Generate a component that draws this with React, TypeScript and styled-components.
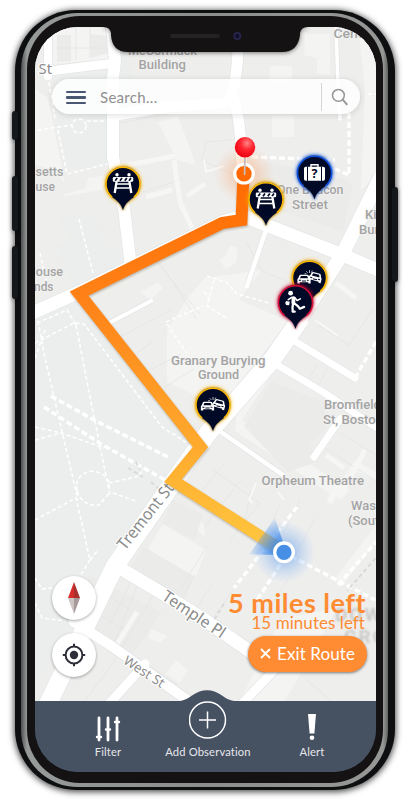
import React from "react";
import styled, { createGlobalStyle } from "styled-components";

const GlobalStyle = createGlobalStyle`
  * { box-sizing: border-box; }
  body { margin: 0; background: #fff; font-family: Lato, "Open Sans", sans-serif; }
  button { font: inherit; border: 0; padding: 0; cursor: pointer; }
`;

const Stage = styled.main`
  width: 410px;
  height: 803px;
  padding: 10px 15px 13px;
  overflow: hidden;
  background: #fff;
`;

const Phone = styled.div`
  position: relative;
  z-index: 0;
  width: 380px;
  height: 780px;
  padding: 3px 7px 3px 6px;
  border-radius: 61px;
  background: #0d0f10;
  box-shadow: 0 1px 6px 1px rgba(0, 0, 0, 0.7);
`;

const SideButton = styled.span<{ $side: "left" | "right"; $top: number; $height: number }>`
  position: absolute;
  z-index: -1;
  top: ${(p) => p.$top}px;
  ${(p) => p.$side}: -3px;
  width: 6px;
  height: ${(p) => p.$height}px;
  border-radius: 3px;
  background: #15191b;
  box-shadow: 0 1px 4px rgba(0, 0, 0, 0.45);
`;

const Rim = styled.div`
  height: 100%;
  padding: 3px 5px 4px 6px;
  border-radius: 57px;
  background: linear-gradient(90deg, #4d504f 0, #969a98 6px, #8b8e8c 50%, #969896 362px, #626463 367px);
`;

const Bezel = styled.div`
  height: 100%;
  padding: 11px 7px 11px 8px;
  border-radius: 53px;
  background: #141212;
`;

const Screen = styled.div`
  position: relative;
  display: flex;
  flex-direction: column;
  width: 341px;
  height: 745px;
  overflow: hidden;
  border-radius: 43px;
  background: #465162;
`;

const MapArea = styled.section`
  position: relative;
  display: flex;
  flex-direction: column;
  justify-content: space-between;
  flex: 1;
  padding: 52px 9px 24px 17px;
  background: #eeeeed;
`;

const MapDrawing = styled.svg`
  position: absolute;
  inset: 0;
  width: 341px;
  height: 675px;
`;

const Notch = styled.svg`
  position: absolute;
  z-index: 3;
  top: -1px;
  left: 68px;
  width: 205px;
  height: 38px;
  overflow: visible;
  filter: drop-shadow(0 1px 2px rgba(0, 0, 0, 0.5));
`;

const SearchBar = styled.div`
  position: relative;
  display: flex;
  align-items: center;
  width: 308px;
  height: 35px;
  padding: 0 11px 0 14px;
  border-radius: 18px;
  background: rgba(255, 255, 255, 0.8);
  box-shadow: 0 1px 6px rgba(0, 0, 0, 0.14);
`;

const MenuButton = styled.button`
  display: flex;
  flex-direction: column;
  gap: 3.2px;
  width: 20px;
  padding-top: 2px;
  background: none;
`;

const MenuLine = styled.span`
  height: 2.2px;
  border-radius: 1px;
  background: #4a5874;
`;

const SearchText = styled.span`
  flex: 1;
  padding-left: 14px;
  font-size: 15px;
  letter-spacing: 0.3px;
  color: #8f8f8f;
`;

const Divider = styled.span`
  width: 1px;
  height: 28px;
  margin-right: 9px;
  background: #d4d4d4;
`;

const LowerRow = styled.div`
  position: relative;
  display: flex;
  justify-content: space-between;
  align-items: flex-end;
`;

const Controls = styled.div`
  display: flex;
  flex-direction: column;
  gap: 13px;
`;

const RoundButton = styled.button`
  display: grid;
  place-items: center;
  width: 44px;
  height: 44px;
  border-radius: 50%;
  background: #fff;
  box-shadow: 0 1px 3px rgba(0, 0, 0, 0.35);
`;

const Trip = styled.div`
  display: flex;
  flex-direction: column;
  align-items: flex-end;
  padding-bottom: 5px;
  color: #ff8b32;
  white-space: nowrap;
`;

const Distance = styled.strong`
  padding-right: 1px;
  font-size: 27px;
  line-height: 27px;
  font-weight: 700;
  letter-spacing: 0.5px;
`;

const Duration = styled.span`
  padding-right: 2px;
  font-size: 17px;
  line-height: 13px;
  letter-spacing: 0.05px;
`;

const ExitButton = styled.button`
  display: flex;
  align-items: center;
  justify-content: center;
  gap: 6px;
  width: 119px;
  height: 36px;
  margin-top: 7px;
  padding-bottom: 2px;
  border-radius: 18px;
  background: #ff8b32;
  box-shadow: 0 1px 3px rgba(0, 0, 0, 0.5);
  color: #fff;
  font-size: 17px;
  letter-spacing: 0.1px;
`;

const Tabs = styled.nav`
  position: relative;
  z-index: 1;
  height: 71px;
  display: grid;
  grid-template-columns: 100px 100px 108px;
  padding-left: 23px;
  background: #465162;
`;

const Bump = styled.svg`
  position: absolute;
  left: 139px;
  top: -11px;
  width: 66px;
  height: 12px;
`;

const Tab = styled.button<{ $gap: number }>`
  position: relative;
  display: flex;
  flex-direction: column;
  align-items: center;
  justify-content: flex-end;
  gap: ${(p) => p.$gap}px;
  padding-bottom: 13px;
  background: none;
  color: #e6e8ec;
  font-size: 11.2px;
  line-height: 15px;
  letter-spacing: 0.15px;
  white-space: nowrap;
`;

type Kind = "barrier" | "bag" | "cars" | "runner";

const Car = () => (
  <g>
    <path fill="#fff" fillRule="evenodd" d="M-4-4.8h8q1 0 1.5 1L6.7-1q1 .4 1 1.6v4H5V3.4H-5v1.2h-2.7v-4q0-1.2 1-1.6l1.2-2.8q.5-1 1.5-1ZM-3.6-3.5-4.7-1H4.7L3.6-3.5Z" />
    <path stroke="#000a26" strokeWidth="1.1" d="M-6 1.2h2.5M6 1.2H3.5M-2.5 2h5" />
  </g>
);

const Glyph = ({ kind }: { kind: Kind }) => {
  if (kind === "barrier")
    return (
      <g stroke="#fff" fill="none" strokeWidth="1.5">
        <circle cx="-6" cy="-9.3" r="1.7" fill="#fff" stroke="none" />
        <circle cx="6" cy="-9.3" r="1.7" fill="#fff" stroke="none" />
        <rect x="-10.2" y="-6.9" width="20.4" height="4.6" rx="1.2" fill="#fff" stroke="none" />
        <path stroke="#000a26" strokeWidth="1.7" d="m-7.8-3.2 2-2.8M-3-3.2l2-2.8M1.8-3.2l2-2.8M6-3.2l2-2.8" />
        <path strokeWidth="2.3" d="M-6.3-3-8.3 9M6.3-3 8.3 9" />
        <path d="M-7 4H7M-6.5-.1h13" />
      </g>
    );
  if (kind === "bag")
    return (
      <g>
        <path stroke="#fff" fill="none" strokeWidth="1.4" d="M-3.5-6v-2.3h7V-6" />
        <rect x="-10.5" y="-6.2" width="21" height="14" rx="1.7" fill="#fff" />
        <path stroke="#000a26" strokeWidth="1" d="M-7-6.5v15M7-6.5v15" />
        <text x="0" y="5.3" textAnchor="middle" fontFamily="Open Sans, sans-serif" fontWeight="700" fontSize="12.5" fill="#000a26">?</text>
      </g>
    );
  if (kind === "cars")
    return (
      <g>
        <g transform="translate(-5.5 1.2) scale(.86 .92)"><Car /></g>
        <g transform="translate(5.9 -.6) rotate(14) scale(.84 .98)"><Car /></g>
        <path stroke="#fff" strokeWidth=".7" d="M0-5v-3M-1.8-5.2l-1.4-1.5M1.8-5.2l1-2.3M-3-4.2h-2" />
      </g>
    );
  return (
    <g fill="none" stroke="#fff" strokeLinecap="round" strokeLinejoin="round">
      <circle cx="-4.9" cy="-9.3" r="2.4" fill="#fff" stroke="none" />
      <path strokeWidth="3.8" d="M-2-4.4-2.2.2" />
      <path strokeWidth="1.6" d="M-3.8-5.2-7.2-2.8M-.8-5 1.6-2 4.8-3.6" />
      <path strokeWidth="2.3" d="M-2.4.8-3 4.8-2.8 9.2h2M-1.2.8 2.4 3.6 4.4 6.2 8.6 4.4" />
      <path fill="#fff" stroke="none" d="m-9.3-1.6 3.6.9-.7 3.4-3 -.3-.9-2.2Z" />
    </g>
  );
};

const Pin = ({ x, y, color, kind }: { x: number; y: number; color: string; kind: Kind }) => {
  const shape = "M0 26.5C-1.8 19.5-5.5 17.2-10.2 13.5A17 17 0 1 1 10.2 13.5C5.5 17.2 1.8 19.5 0 26.5Z";
  return (
    <g transform={`translate(${x} ${y})`}>
      <circle r="18" cy="-.3" fill={color} opacity=".7" filter="url(#glow)" />
      <path d={shape} fill="#000a26" stroke={color} strokeWidth="3" strokeOpacity=".25" filter="url(#soft)" />
      <path d={shape} fill="#000a26" />
      <path d="M-10.9 13.2A17 17 0 1 1 10.9 13.2" fill="none" stroke={color} strokeWidth="1.5" />
      <Glyph kind={kind} />
    </g>
  );
};

type Label = [string, number, number, number?];
const labels: Label[] = [
  ["McCormack", 128, 54.5, 69], ["Building", 138.5, 69, 47.5], ["Cent", 333.5, 37.5, 29],
  ["setts", 35.5, 176, 28], ["use", 35.5, 190.5, 19.5], ["House", 27, 276, 36], ["nds", 34, 290.5, 19.5],
  ["One Beacon", 277, 194, 66.5], ["Street", 292, 208.5, 36], ["King's", 365, 219], ["Burying", 359, 233.5],
  ["Granary Burying", 171, 364.5, 94.5], ["Ground", 198, 379, 41], ["Bromfield", 324, 409, 57],
  ["St, Boston", 323, 423.5, 60], ["Orpheum Theatre", 261.5, 485, 102.5],
  ["Wash", 351, 510, 32], ["(South)", 348, 525, 43],
];

const roads: [number, string][] = [
  [8, "M48 27V76"],
  [9, "M50 71 90 66 115 63"],
  [12, "M112 27 115 60 113 78V157L119 185 124 208 131 267"],
  [11, "M116 115 165 107 225 103Q236 98 238 50V27"],
  [11, "M232 95Q241 112 242 175V200"],
  [13, "M30 314 77 293 222 222 243 216 338 253 380 271"],
  [18, "M45 710 115 566 168 490 208 433 272 360 299 321"],
  [14, "M299 321 327 278 343 253 380 178"],
  [7, "M288 337 355 378M272 362 323 392 380 430M340 419 314 457"],
  [4.5, "M218 430 283 475M265 233 247 286"],
  [13, "M118 567 160 592 205 620 248 650 262 660"],
  [10, "M74 622 110 645 190 702"],
  [9, "M145 664 108 705M284 660 240 706"],
  [4, "M111 322 151 301"],
  [3.5, "M336 27 338 85 340 119"],
];

const routePath = "M243.5 174 241.5 220 222 223 79 293.5 200.5 447 173 480.5 283 551";

const MapView = () => (
  <MapDrawing viewBox="35 27 341 675" aria-label="Route map">
    <defs>
      <filter id="glow" x="-50%" y="-50%" width="200%" height="200%"><feGaussianBlur stdDeviation="2" /></filter>
      <filter id="soft" x="-50%" y="-50%" width="200%" height="200%"><feGaussianBlur stdDeviation="1" /></filter>
      <linearGradient id="route" gradientUnits="userSpaceOnUse" x1="0" y1="170" x2="0" y2="552">
        <stop offset="0" stopColor="#ff6900" /><stop offset=".35" stopColor="#ff8318" />
        <stop offset=".75" stopColor="#ffad2f" /><stop offset="1" stopColor="#ffc83f" />
      </linearGradient>
      <radialGradient id="ball" cx=".6" cy=".3" r=".7">
        <stop offset="0" stopColor="#ff8585" /><stop offset=".45" stopColor="#ff2631" /><stop offset="1" stopColor="#ee0010" />
      </radialGradient>
      <radialGradient id="blueGlow"><stop offset=".2" stopColor="#4f93ea" stopOpacity=".5" /><stop offset="1" stopColor="#7db2f5" stopOpacity="0" /></radialGradient>
      <radialGradient id="orangeGlow"><stop offset=".2" stopColor="#ff7a22" stopOpacity=".32" /><stop offset="1" stopColor="#ff9a55" stopOpacity="0" /></radialGradient>
      <radialGradient id="beam" gradientUnits="userSpaceOnUse" cx="284" cy="552" r="38">
        <stop offset=".25" stopColor="#3d86e4" stopOpacity=".85" /><stop offset="1" stopColor="#5c9df0" stopOpacity=".04" />
      </radialGradient>
    </defs>

    <rect x="35" y="27" width="341" height="675" fill="#eeeeed" />
    <path fill="#eceeee" d="M35 318 74 299 199 448 168 480 35 685ZM35 80 110 72 107 165 66 170 52 80ZM60 216 95 215 104 250 118 248 126 268 74 292 57 246 70 240ZM118 64 130 55 132 78 128 110 118 112Z" />
    <g fill="#f4f4f3">
      <path d="M52 28H110V60L52 64ZM35 89 48 98 65 184 55 170 35 165ZM62 195 86 188 88 178 108 175 102 190 66 196Z" />
      <path d="M158 122 178 116 196 165 177 160ZM270 66H292V83H269ZM305 34H330V75L317 73V58L304 55ZM272 116H294V137H272ZM358 27 365 90 361 190 376 176V27Z" />
      <path d="M189 296 205 278 262 270 239 300 289 321 220 407 167 382 167 330ZM230 245 238 248 236 263 226 269 219 260 227 254ZM140 292 158 282 163 288 150 300Z" />
      <path d="M237 412 255 391 271 376 242 420 350 490 340 500 235 431Z" />
      <path d="M181 507 204 524 205 536 178 520ZM163 524 206 550 196 577 148 549ZM327 502 355 460 380 475 376 480 351 469 332 505ZM334 580 376 525V542L341 587Z" />
      <path d="M151 629 167 636 160 643 148 638ZM176 660 188 670 180 683 166 674ZM104 572 116 566 90 620 78 620ZM40 702 68 675 46 702ZM280 620 338 607 285 701 240 701Z" />
    </g>
    <g fill="#ebebea">
      <path d="M57 35H71V61L57 62ZM90 34 108 36V53L91 58ZM255 170 267 162 345 180 353 184 343 232 258 203Z" />
      <path d="M244 426 272 382 325 402 325 430 310 444 319 461 288 472ZM173 500 203 514 195 540 162 523ZM144 547 194 577 184 600 128 570ZM89 575 162 612 132 655 80 620Z" />
    </g>
    <path fill="none" stroke="#e3e5e5" strokeWidth=".8" d="M76 28V60M90 28V58M56 48H108M120 123 178 112M143 192 183 179M148 252 200 314M160 263 197 319M206 142 202 160 232 174M206 142 231 140M246 241 261 270 322 297M318 325 349 345 374 308M122 336 171 310M136 354 152 342M150 370 181 354M165 387 194 369M280 345 268 362M318 363 306 385M328 367 316 390M213 470 260 503 230 540M241 480 205 526M224 464 194 500M340 433 376 455M325 448 376 481M251 490 245 520M96 588 132 611M85 606 126 630M104 580 93 601M145 565 114 645M133 577 110 625M154 594 121 650M195 575 184 594M213 583 190 618M280 505 265 536M300 500 278 545M315 518 293 560M207 546 180 590M151 667 178 685M119 655 84 702M85 633 51 700M307 680 332 702M253 562 213 618M288 579 261 620" />
    <path fill="none" stroke="#f6f6f5" strokeWidth="5" d="M128 165 175 156M146 197 172 190M187 196 205 184M174 160 180 202 194 232M326 455 344 468M340 496 365 450M329 501 344 479M137 612 114 649M336 283 356 298" />
    <path fill="none" stroke="#f8f8f7" strokeWidth="2" d="M204 160 206 172 224 166M284 500 278 492M256 483 249 500 253 503M315 320 338 336" />

    <g fill="none" strokeLinejoin="round">
      {roads.map(([w, d]) => <path key={d} d={d} stroke="#e2e6e6" strokeWidth={w + 1.4} />)}
      {roads.map(([w, d]) => <path key={d} d={d} stroke="#fff" strokeWidth={w} strokeLinecap="round" />)}
    </g>

    <g fill="none" stroke="#fff" strokeWidth="1.5" strokeDasharray="4 2.5">
      <path d="M35 343 74 323 84 324 162 427 189 444M37 323 67 310 76 325M38 321 45 358 64 440 78 500M35 358 45 330M76 325 90 397 106 476 110 495M35 427 61 433 104 448M35 440 61 433M77 491Q74 473 94 471 111 475 109 489M109 483 140 476 142 468M113 493 136 501M35 520 76 498 90 560 98 550M77 491Q83 507 99 505L110 492M90 560 80 576M35 578 42 589 52 588M35 603 42 618 65 621M48 76 55 118M38 130 72 125M87 121 105 121M58 130 67 174 107 164M79 219 93 273M40 253 48 288" />
      <circle cx="79" cy="126" r="7" />
      <path d="M368 94H376M207 276 226 282 237 294 269 303M214 280 207 306 226 318M210 300 203 290M166 322 203 306M167 324 193 363" />
    </g>
    <g fill="none" stroke="#fff" strokeWidth="3.4" strokeDasharray="6 3">
      <path d="M51 396 96 421 170 458M44 407 101 444 165 480" />
      <path d="M355 378 377 340M349 95V175L335 169M252 157 335 160M297 507 234 588M284 556 278 568 254 605M283 552 375 600M378 540 338 585" />
    </g>
    <path fill="none" stroke="#d7d9d9" strokeWidth="1.8" strokeDasharray="4 3" d="M128 468 143 477M136 462 140 470M151 482 158 488M380 553 347 591M224 604 214 620" />

    <g fontFamily="Roboto, sans-serif" fontSize="19" fontWeight="700" fill="#cbcbca" letterSpacing="2" filter="url(#soft)">
      <text x="335" y="621">DOW</text>
      <text x="344" y="643">CRO</text>
    </g>
    <g fontFamily="Roboto, sans-serif" fontSize="13" fontWeight="500" fill="#a3a3a3" stroke="#f4f4f3" strokeWidth="1.2" paintOrder="stroke" strokeLinejoin="round">
      {labels.map(([t, x, y, w]) => <text key={t + y} x={x} y={y} textLength={w} lengthAdjust="spacingAndGlyphs">{t}</text>)}
    </g>
    <g fontFamily="Noto Sans, sans-serif" fill="#8c8c8c" stroke="#fff" strokeWidth="2" paintOrder="stroke">
      <text x="38.5" y="74" fontSize="14" textLength="13.5" lengthAdjust="spacingAndGlyphs">St</text>
      <text transform="translate(125 551) rotate(-51.5)" fontSize="16.5" textLength="80" lengthAdjust="spacingAndGlyphs">Tremont St</text>
      <text transform="translate(161 599) rotate(33.5)" fontSize="16" textLength="72" lengthAdjust="spacingAndGlyphs">Temple Pl</text>
      <text transform="translate(122.5 663) rotate(33)" fontSize="13.2" textLength="46" lengthAdjust="spacingAndGlyphs">West St</text>
    </g>

    <circle cx="244" cy="174" r="30" fill="url(#orangeGlow)" />
    <path d={routePath} transform="translate(.5 1.5)" fill="none" stroke="#5b4a35" strokeOpacity=".35" strokeWidth="12" filter="url(#soft)" />
    <path d={routePath} fill="none" stroke="url(#route)" strokeWidth="12" />

    <Pin x={314.5} y={173} color="#0b50df" kind="bag" />
    <Pin x={123} y={184} color="#ffb900" kind="barrier" />
    <Pin x={266} y={199.5} color="#ffb900" kind="barrier" />
    <Pin x={309.5} y={278} color="#ffb900" kind="cars" />
    <Pin x={295.5} y={302.5} color="#d90d35" kind="runner" />
    <Pin x={213} y={405} color="#ffb900" kind="cars" />

    <circle cx="244" cy="173.7" r="9.3" fill="#ff6900" stroke="#fff" strokeWidth="3.2" />
    <path d="M245 154 244.6 175" stroke="#c5bbb9" strokeWidth="1.8" />
    <circle cx="245" cy="147.3" r="10.2" fill="url(#ball)" />

    <circle cx="284" cy="552" r="31" fill="url(#blueGlow)" />
    <path d="M275 518 249 554.5 280 555 284 545Z" fill="url(#beam)" />
    <circle cx="284" cy="552.3" r="9.3" fill="#478ee5" stroke="#fff" strokeWidth="3.3" />
  </MapDrawing>
);

export default function App() {
  return (
    <Stage>
      <GlobalStyle />
      <Phone>
        <SideButton $side="left" $top={101} $height={29} />
        <SideButton $side="left" $top={166} $height={55} />
        <SideButton $side="left" $top={236} $height={53} />
        <SideButton $side="right" $top={177} $height={95} />
        <Rim>
          <Bezel>
            <Screen>
              <Notch viewBox="0 0 205 38">
                <path fill="#141212" d="M0 0H205V1Q198 1 197 7V9Q195 26 179 26H25Q9 26 8 9V7Q7 1 0 1Z" />
                <rect x="67" y="8" width="50" height="4" rx="2" fill="#242323" />
                <circle cx="134.3" cy="10" r="4" fill="#28264d" />
                <circle cx="134.3" cy="10" r="2.2" fill="#11112b" />
              </Notch>
              <MapArea>
                <MapView />
                <SearchBar>
                  <MenuButton aria-label="Menu"><MenuLine /><MenuLine /><MenuLine /></MenuButton>
                  <SearchText>Search...</SearchText>
                  <Divider />
                  <svg width="18" height="18" viewBox="0 0 18 18" fill="none" stroke="#969696" strokeWidth="1.5">
                    <circle cx="7.4" cy="7.3" r="5.9" /><path strokeWidth="2" d="m11.7 11.7 4.6 5.2" />
                  </svg>
                </SearchBar>
                <LowerRow>
                  <Controls>
                    <RoundButton aria-label="Compass">
                      <svg width="14" height="32" viewBox="0 0 14 32">
                        <path fill="#d52d2c" d="M7 0 1 16h6Z" /><path fill="#a7302f" d="M7 0v16h6Z" />
                        <path fill="#cdc4c4" d="M1 16h6v16Z" /><path fill="#a89a9b" d="M7 16h6L7 32Z" />
                      </svg>
                    </RoundButton>
                    <RoundButton aria-label="My location">
                      <svg width="24" height="24" viewBox="0 0 24 24" fill="none" stroke="#2d2e38" strokeWidth="2">
                        <circle cx="12" cy="12" r="8.4" /><circle cx="12" cy="12" r="4.2" fill="#2d2e38" stroke="none" />
                        <path d="M12 .8v3M12 20.2v3M.8 12h3M20.2 12h3" />
                      </svg>
                    </RoundButton>
                  </Controls>
                  <Trip>
                    <Distance>5 miles left</Distance>
                    <Duration>15 minutes left</Duration>
                    <ExitButton>
                      <svg width="11" height="11" viewBox="0 0 11 11" stroke="#fff" strokeWidth="1.9"><path d="m1 1 9 9m0-9-9 9" /></svg>
                      Exit Route
                    </ExitButton>
                  </Trip>
                </LowerRow>
              </MapArea>
              <Tabs>
                <Bump viewBox="0 0 66 12"><path fill="#465162" d="M0 11.5C9 11.5 13 9 18 5.5Q33-5 48 5.5C53 9 57 11.5 66 11.5V12H0Z" /></Bump>
                <Tab $gap={2}>
                  <svg width="26" height="26" viewBox="0 0 26 26" fill="none" stroke="#fff" strokeWidth="2.8" strokeLinecap="round">
                    <path d="M4 2v22M13 2v22M22 2v22" /><path strokeWidth="2.4" d="M2 21h4M11 13.5h4M20 6h4" />
                  </svg>
                  Filter
                </Tab>
                <Tab $gap={5}>
                  <svg width="38" height="38" viewBox="0 0 38 38" fill="none" stroke="#fff" strokeWidth="1.5">
                    <circle cx="18.5" cy="19" r="18" /><path d="M18.5 10.5v17M10 19h17" />
                  </svg>
                  Add Observation
                </Tab>
                <Tab $gap={3}>
                  <svg width="10" height="27" viewBox="0 0 10 27" fill="#fff"><path d="M1 0h8L7.4 19.5H2.6Z" /><circle cx="5" cy="23.8" r="2.3" /></svg>
                  Alert
                </Tab>
              </Tabs>
            </Screen>
          </Bezel>
        </Rim>
      </Phone>
    </Stage>
  );
}
